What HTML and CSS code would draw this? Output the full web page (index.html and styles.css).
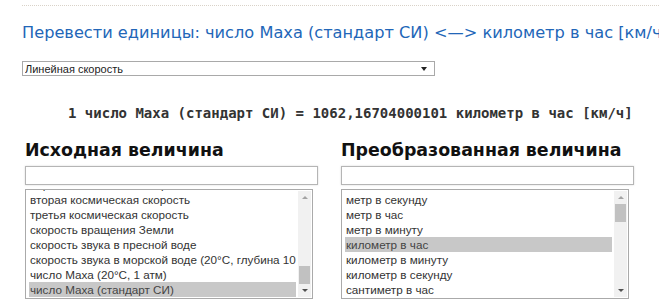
FILE: index.html
```html
<!DOCTYPE html>
<html lang="ru">
<head>
<meta charset="UTF-8">
<title>Перевести единицы: число Маха (стандарт СИ) в километр в час</title>
<link rel="stylesheet" href="styles.css">
</head>
<body>

<div class="rule"></div>

<h1 class="title">Перевести единицы: число Маха (стандарт СИ) &lt;—&gt; километр в час [км/ч]</h1>

<div class="category">
  <select class="category-select">
    <option>Линейная скорость</option>
  </select>
</div>

<div class="result">1 число Маха (стандарт СИ) = 1062,16704000101 километр в час [км/ч]</div>

<div class="columns">
  <div class="col">
    <h2 class="col-title">Исходная величина</h2>
    <input class="filter" type="text">
    <div class="listbox">
      <div class="options bottom">
        <div class="option">первая космическая скорость</div>
        <div class="option">вторая космическая скорость</div>
        <div class="option">третья космическая скорость</div>
        <div class="option">скорость вращения Земли</div>
        <div class="option">скорость звука в пресной воде</div>
        <div class="option">скорость звука в морской воде (20°C, глубина 10 м)</div>
        <div class="option">число Маха (20°C, 1 атм)</div>
        <div class="option selected">число Маха (стандарт СИ)</div>
      </div>
      <div class="scrollbar">
        <span class="arrow up"></span>
        <div class="track thumb-end"><div class="thumb"></div></div>
        <span class="arrow down"></span>
      </div>
    </div>
  </div>

  <div class="col">
    <h2 class="col-title">Преобразованная величина</h2>
    <input class="filter" type="text">
    <div class="listbox">
      <div class="options">
        <div class="option">метр в секунду</div>
        <div class="option">метр в час</div>
        <div class="option">метр в минуту</div>
        <div class="option selected">километр в час</div>
        <div class="option">километр в минуту</div>
        <div class="option">километр в секунду</div>
        <div class="option">сантиметр в час</div>
      </div>
      <div class="scrollbar">
        <span class="arrow up"></span>
        <div class="track"><div class="thumb"></div></div>
        <span class="arrow down"></span>
      </div>
    </div>
  </div>
</div>

</body>
</html>
```

FILE: styles.css
```css
body, html {
  margin: 0;
  padding: 0;
  overflow: hidden;
  background: #fff;
  font-family: 'Liberation Sans', Arial, sans-serif;
}
body {
  padding: 5px 0 0 22px;
}
.rule {
  border-top: 1px dotted #d9d2c8;
}
.title {
  margin: 17px 0 0 0;
  font-family: 'DejaVu Sans', Verdana, sans-serif;
  font-size: 16.2px;
  font-weight: normal;
  color: #2266b8;
  white-space: nowrap;
}
.category {
  position: relative;
  width: 413px;
  margin-top: 19px;
}
.category-select {
  display: block;
  width: 100%;
  height: 15px;
  margin: 0;
  padding: 0 0 0 2px;
  border: 1px solid #a9a9a9;
  border-radius: 0;
  background: #fff;
  font-family: 'Liberation Sans', Arial, sans-serif;
  font-size: 11px;
  color: #222;
  -webkit-appearance: none;
  appearance: none;
}
.category::after {
  content: '';
  position: absolute;
  right: 8px;
  top: 6px;
  border-left: 3px solid transparent;
  border-right: 3px solid transparent;
  border-top: 4px solid #222;
}
.result {
  margin: 29px 0 0 46px;
  font-family: 'DejaVu Sans Mono', monospace;
  font-size: 14px;
  font-weight: bold;
  color: #333;
  white-space: nowrap;
}
.columns {
  display: grid;
  grid-template-columns: 293px 293px;
  column-gap: 23px;
  margin: 18px 0 0 3px;
}
.col-title {
  margin: 0;
  font-family: 'DejaVu Sans', Verdana, sans-serif;
  font-size: 17.4px;
  font-weight: bold;
  color: #111;
  line-height: 22px;
}
.filter {
  display: block;
  box-sizing: border-box;
  width: 293px;
  height: 19px;
  margin: 5px 0 0 0;
  border: 1px solid #b5b5b5;
  box-shadow: 0 0 2px rgba(0, 0, 0, 0.15);
  outline: none;
}
.listbox {
  display: flex;
  box-sizing: border-box;
  width: 288px;
  height: 110px;
  margin-top: 4px;
  border: 1px solid #aaa;
  background: #fff;
}
.options {
  flex: 1;
  display: flex;
  flex-direction: column;
  overflow: hidden;
  padding: 2px 2px 0 3px;
  min-width: 0;
}
.options.bottom {
  justify-content: flex-end;
  padding-bottom: 1px;
}
.option {
  flex: none;
  height: 15px;
  line-height: 15px;
  padding: 0 1px;
  font-size: 11.7px;
  color: #333;
  white-space: nowrap;
  overflow: hidden;
}
.option.selected {
  background: #c8c8c8;
  color: #444;
}
.scrollbar {
  width: 13px;
  margin: 1px 1px 1px 0;
  background: #f1f1f1;
  display: flex;
  flex-direction: column;
  align-items: center;
}
.arrow {
  flex: none;
  width: 0;
  height: 0;
  margin: 5px 0;
  border-left: 3px solid transparent;
  border-right: 3px solid transparent;
}
.arrow.up {
  border-bottom: 3px solid #a3a3a3;
}
.arrow.down {
  border-top: 3px solid #505050;
}
.track {
  flex: 1;
  width: 100%;
  display: flex;
  flex-direction: column;
}
.track.thumb-end {
  justify-content: flex-end;
}
.thumb {
  height: 18px;
  margin: 0 1px;
  background: #c1c1c1;
}
```
